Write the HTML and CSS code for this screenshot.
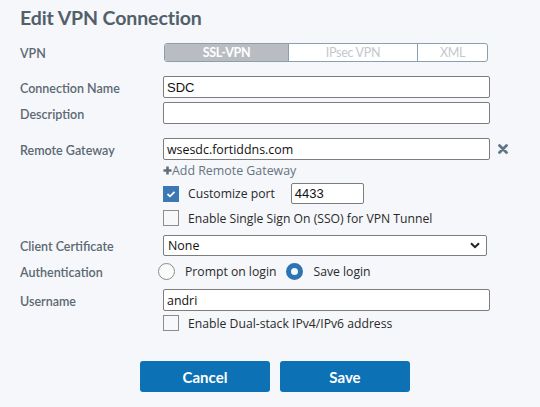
FILE: index.html
```html
<!DOCTYPE html>
<html>
<head>
<meta charset="utf-8">
<link rel="stylesheet" href="styles.css">
</head>
<body>
<div class="dialog">
  <h1 class="title">Edit VPN Connection</h1>
  <div class="form">
    <div class="row r-vpn">
      <div class="label">VPN</div>
      <div class="seg">
        <div class="seg-item active s1">SSL-VPN</div>
        <div class="seg-item s2">IPsec VPN</div>
        <div class="seg-item s3">XML</div>
      </div>
    </div>
    <div class="row r-conn">
      <div class="label">Connection Name</div>
      <div class="input arial">SDC</div>
    </div>
    <div class="row r-desc">
      <div class="label">Description</div>
      <div class="input"></div>
    </div>
    <div class="row r-gw">
      <div class="label">Remote Gateway</div>
      <div class="input segoe">wsesdc.fortiddns.com</div>
      <svg class="xicon" width="10" height="10" viewBox="0 0 10 10"><path d="M1.5 1.5 L8.5 8.5 M8.5 1.5 L1.5 8.5" stroke="#5f7784" stroke-width="2.8" stroke-linecap="round"/></svg>
    </div>
    <div class="row r-add">
      <div class="label"></div>
      <div class="add"><svg class="plus" width="9" height="9" viewBox="0 0 9 9"><path d="M4.5 0.5 V8.5 M0.5 4.5 H8.5" stroke="#5f6f7b" stroke-width="2.6"/></svg>Add Remote Gateway</div>
    </div>
    <div class="row r-custom">
      <div class="label"></div>
      <div class="cb checked"><svg width="10" height="8" viewBox="0 0 10 8"><path d="M1.5 4 L4 6.3 L8.5 1.8" stroke="#fff" stroke-width="1.8" fill="none"/></svg></div>
      <div class="cb-text">Customize port</div>
      <div class="input port arial">4433</div>
    </div>
    <div class="row r-sso">
      <div class="label"></div>
      <div class="cb"></div>
      <div class="cb-text">Enable Single Sign On (SSO) for VPN Tunnel</div>
    </div>
    <div class="row r-cert">
      <div class="label">Client Certificate</div>
      <div class="select segoe"><span>None</span><svg width="10" height="7" viewBox="0 0 10 7"><path d="M1 1.2 L5 5.2 L9 1.2" stroke="#222" stroke-width="2" fill="none"/></svg></div>
    </div>
    <div class="row r-auth">
      <div class="label">Authentication</div>
      <div class="radios">
        <div class="radio"></div>
        <div class="radio-text">Prompt on login</div>
        <div class="radio on"></div>
        <div class="radio-text">Save login</div>
      </div>
    </div>
    <div class="row r-user">
      <div class="label">Username</div>
      <div class="input segoe">andri</div>
    </div>
    <div class="row r-dual">
      <div class="label"></div>
      <div class="cb"></div>
      <div class="cb-text">Enable Dual-stack IPv4/IPv6 address</div>
    </div>
    <div class="buttons">
      <button class="btn">Cancel</button>
      <button class="btn">Save</button>
    </div>
  </div>
</div>
</body>
</html>
```
FILE: styles.css
```css
* { box-sizing: border-box; }
html, body { margin: 0; padding: 0; }
body {
  background: #f5f7fa;
  width: 540px;
  height: 407px;
  overflow: hidden;
  font-family: Lato, "Liberation Sans", sans-serif;
}
.dialog { padding: 0 20px; }
.title {
  margin: 0;
  height: 36px;
  padding-top: 6px;
  font-size: 19.5px;
  line-height: 24px;
  font-weight: 700;
  color: #52606b;
  letter-spacing: -0.1px;
}
.form { display: flex; flex-direction: column; }
.row { display: flex; align-items: center; }
.label {
  width: 143px;
  flex: none;
  font-family: Lato, sans-serif;
  font-weight: 600;
  font-size: 12.5px;
  color: #5c6872;
  padding-top: 2px;
}
.r-vpn { margin-top: 7px; height: 19px; }
.r-conn { margin-top: 14px; height: 22px; }
.r-desc { margin-top: 4px; height: 22px; }
.r-gw { margin-top: 14px; height: 22px; }
.r-add { margin-top: 2px; height: 16px; }
.r-custom { margin-top: 5px; height: 21px; }
.r-sso { margin-top: 6px; height: 16px; }
.r-cert { margin-top: 9px; height: 21px; }
.r-auth { margin-top: 7px; height: 17px; }
.r-user { margin-top: 9px; height: 22px; }
.r-dual { margin-top: 4px; height: 16px; }

.seg {
  margin-left: 1px;
  display: flex;
  width: 324px;
  height: 19px;
  border: 1px solid #8aa0ae;
  border-radius: 3px;
  overflow: hidden;
  background: #fff;
}
.seg-item {
  display: flex;
  align-items: center;
  justify-content: center;
  font-family: Lato, sans-serif;
  font-size: 12.5px;
  color: #c3c7cb;
  letter-spacing: -0.3px;
}
.seg-item.active { background: #b9bdc1; color: #fff; font-weight: 700; }
.s1 { width: 123px; }
.s2 { width: 130px; border-left: 1px solid #8aa0ae; border-right: 1px solid #8aa0ae; }
.s3 { flex: 1; }

.input {
  width: 327px;
  height: 100%;
  background: #fff;
  border: 1px solid #7d7d7d;
  border-radius: 2px;
  padding: 0 3px;
  display: flex;
  align-items: center;
  font-size: 13px;
  color: #111;
}
.arial { font-family: "Liberation Sans", Arial, sans-serif; font-size: 13px; }
.segoe { font-family: "Open Sans", sans-serif; font-size: 12.4px; }
.input.port { width: 73px; margin-left: 16px; }
.xicon { margin-left: 8px; }

.add {
  display: flex;
  align-items: center;
  font-family: "Open Sans", sans-serif;
  font-size: 12.4px;
  color: #66747f;
}
.plus { margin-right: 0; }

.cb {
  width: 16px;
  height: 16px;
  flex: none;
  border: 1px solid #8c8c8c;
  background: #f7f8f9;
  display: flex;
  align-items: center;
  justify-content: center;
}
.cb.checked { background: #3b78b4; border-color: #3b78b4; }
.cb-text {
  margin-left: 9px;
  font-family: "Open Sans", sans-serif;
  font-size: 12.2px;
  color: #2a2a2a;
}

.select {
  width: 324px;
  height: 100%;
  background: #fff;
  border: 1px solid #7d7d7d;
  border-radius: 2px;
  padding: 0 6px 0 4px;
  display: flex;
  align-items: center;
  justify-content: space-between;
  color: #111;
}

.radios { display: flex; align-items: center; margin-left: -5px; }
.radio {
  width: 17px;
  height: 17px;
  border-radius: 50%;
  border: 1px solid #8c8c8c;
  background: #fafafa;
}
.radio.on { border: 5px solid #2c74b4; background: #f4f7fb; margin-left: 10px; }
.radio-text {
  margin-left: 10px;
  font-family: "Open Sans", sans-serif;
  font-size: 12.2px;
  color: #2a2a2a;
}

.buttons {
  display: flex;
  justify-content: center;
  gap: 10px;
  margin-top: 30px;
  padding-left: 10px;
  margin-left: -20px;
  margin-right: -20px;
}
.btn {
  width: 130px;
  height: 31px;
  border: none;
  border-radius: 3px;
  background: #0d71b6;
  color: #fff;
  font-family: Lato, sans-serif;
  font-weight: 700;
  font-size: 15px;
  padding: 0;
}
```
